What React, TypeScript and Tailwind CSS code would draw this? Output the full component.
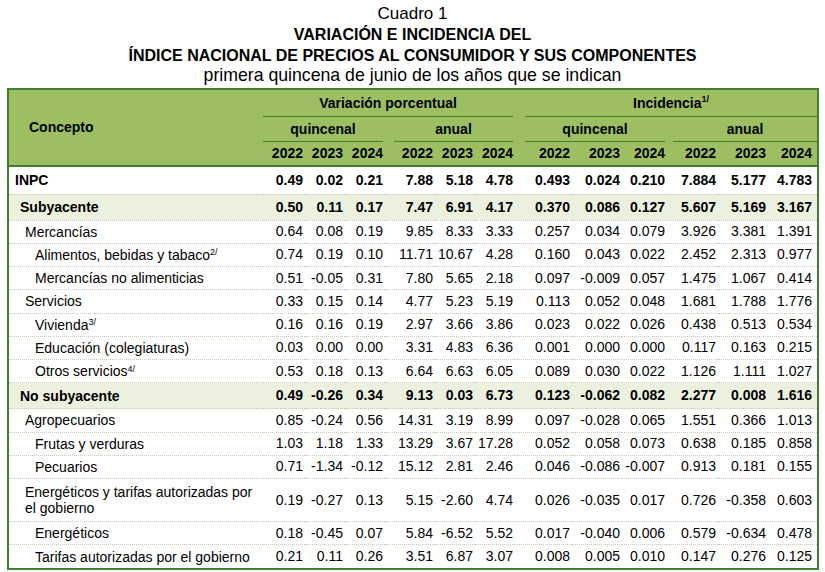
type Row = {
  label: string;
  sup?: string;
  level: 0 | 1 | 2 | 3;
  strong?: boolean;
  tall?: boolean;
  v: string[];
};

const ROWS: Row[] = [
  { label: "INPC", level: 0, strong: true, v: ["0.49", "0.02", "0.21", "7.88", "5.18", "4.78", "0.493", "0.024", "0.210", "7.884", "5.177", "4.783"] },
  { label: "Subyacente", level: 1, strong: true, v: ["0.50", "0.11", "0.17", "7.47", "6.91", "4.17", "0.370", "0.086", "0.127", "5.607", "5.169", "3.167"] },
  { label: "Mercancías", level: 2, v: ["0.64", "0.08", "0.19", "9.85", "8.33", "3.33", "0.257", "0.034", "0.079", "3.926", "3.381", "1.391"] },
  { label: "Alimentos, bebidas y tabaco", sup: "2/", level: 3, v: ["0.74", "0.19", "0.10", "11.71", "10.67", "4.28", "0.160", "0.043", "0.022", "2.452", "2.313", "0.977"] },
  { label: "Mercancías no alimenticias", level: 3, v: ["0.51", "-0.05", "0.31", "7.80", "5.65", "2.18", "0.097", "-0.009", "0.057", "1.475", "1.067", "0.414"] },
  { label: "Servicios", level: 2, v: ["0.33", "0.15", "0.14", "4.77", "5.23", "5.19", "0.113", "0.052", "0.048", "1.681", "1.788", "1.776"] },
  { label: "Vivienda", sup: "3/", level: 3, v: ["0.16", "0.16", "0.19", "2.97", "3.66", "3.86", "0.023", "0.022", "0.026", "0.438", "0.513", "0.534"] },
  { label: "Educación (colegiaturas)", level: 3, v: ["0.03", "0.00", "0.00", "3.31", "4.83", "6.36", "0.001", "0.000", "0.000", "0.117", "0.163", "0.215"] },
  { label: "Otros servicios", sup: "4/", level: 3, v: ["0.53", "0.18", "0.13", "6.64", "6.63", "6.05", "0.089", "0.030", "0.022", "1.126", "1.111", "1.027"] },
  { label: "No subyacente", level: 1, strong: true, v: ["0.49", "-0.26", "0.34", "9.13", "0.03", "6.73", "0.123", "-0.062", "0.082", "2.277", "0.008", "1.616"] },
  { label: "Agropecuarios", level: 2, v: ["0.85", "-0.24", "0.56", "14.31", "3.19", "8.99", "0.097", "-0.028", "0.065", "1.551", "0.366", "1.013"] },
  { label: "Frutas y verduras", level: 3, v: ["1.03", "1.18", "1.33", "13.29", "3.67", "17.28", "0.052", "0.058", "0.073", "0.638", "0.185", "0.858"] },
  { label: "Pecuarios", level: 3, v: ["0.71", "-1.34", "-0.12", "15.12", "2.81", "2.46", "0.046", "-0.086", "-0.007", "0.913", "0.181", "0.155"] },
  { label: "Energéticos y tarifas autorizadas por|el gobierno", level: 2, tall: true, v: ["0.19", "-0.27", "0.13", "5.15", "-2.60", "4.74", "0.026", "-0.035", "0.017", "0.726", "-0.358", "0.603"] },
  { label: "Energéticos", level: 3, v: ["0.18", "-0.45", "0.07", "5.84", "-6.52", "5.52", "0.017", "-0.040", "0.006", "0.579", "-0.634", "0.478"] },
  { label: "Tarifas autorizadas por el gobierno", level: 3, v: ["0.21", "0.11", "0.26", "3.51", "6.87", "3.07", "0.008", "0.005", "0.010", "0.147", "0.276", "0.125"] },
];

const COLS = ["w-[254px]", "w-[42px]", "w-[40px]", "w-[40px]", "w-[50px]", "w-[40px]", "w-[40px]", "w-[57px]", "w-[50px]", "w-[45px]", "w-[51px]", "w-[50px]", "w-[49px]"];
const YEARS = ["2022", "2023", "2024", "2022", "2023", "2024", "2022", "2023", "2024", "2022", "2023", "2024"];

const INDENT = ["pl-[6px]", "pl-[11px]", "pl-[16px]", "pl-[26px]"];

function rowHeight(r: Row) {
  if (r.tall) return "h-[43px]";
  if (r.level === 0) return "h-[28px]";
  if (r.level === 1) return "h-[26px]";
  return "h-[23.25px]";
}

function GroupHead({ children, line }: { children: React.ReactNode; line: string }) {
  return (
    <div className={`flex items-center justify-center border-b border-[#3f7f2f] ${line}`}>
      {children}
    </div>
  );
}

export default function App() {
  return (
    <div className="w-[825px] h-[572px] overflow-hidden bg-white text-black font-['Liberation_Sans',Arial,sans-serif]">
      {/* título */}
      <div className="pt-[3px] text-center">
        <div className="text-[17px] leading-[21px]">Cuadro 1</div>
        <div className="text-[16px] leading-[21px] font-bold">VARIACIÓN E INCIDENCIA DEL</div>
        <div className="text-[16px] leading-[21px] font-bold">
          ÍNDICE NACIONAL DE PRECIOS AL CONSUMIDOR Y SUS COMPONENTES
        </div>
        <div className="text-[17.7px] leading-[18px]">primera quincena de junio de los años que se indican</div>
      </div>

      <div className="mt-[4px] ml-[7px] w-[812px] border-2 border-[#3f7f2f]">
        <table className="w-[808px] table-fixed border-collapse text-[14px]">
          <colgroup>
            {COLS.map((c, i) => (
              <col key={i} className={c} />
            ))}
          </colgroup>
          <thead className="bg-[#9dbf62] font-bold">
            <tr>
              <th rowSpan={3} className="pl-[20px] text-left align-middle font-bold border-b-2 border-[#3f7f2f]">
                Concepto
              </th>
              <th colSpan={6} className="p-0 font-bold">
                <GroupHead line="h-[27px] mr-[2px]">Variación porcentual</GroupHead>
              </th>
              <th colSpan={6} className="p-0 font-bold">
                <GroupHead line="h-[27px] ml-[10px]">
                  Incidencia<sup className="text-[9px]">1/</sup>
                </GroupHead>
              </th>
            </tr>
            <tr>
              <th colSpan={3} className="p-0 font-bold">
                <GroupHead line="h-[25px] mr-[2px]">quincenal</GroupHead>
              </th>
              <th colSpan={3} className="p-0 font-bold">
                <GroupHead line="h-[25px] ml-[9px] mr-[2px]">anual</GroupHead>
              </th>
              <th colSpan={3} className="p-0 font-bold">
                <GroupHead line="h-[25px] ml-[10px] mr-[2px]">quincenal</GroupHead>
              </th>
              <th colSpan={3} className="p-0 font-bold">
                <GroupHead line="h-[25px] ml-[6px]">anual</GroupHead>
              </th>
            </tr>
            <tr className="h-[24px]">
              {YEARS.map((y, i) => (
                <th
                  key={i}
                  className={`text-right font-bold border-b-2 border-[#3f7f2f] ${i === 11 ? "pr-[5px]" : "pr-[2px]"}`}
                >
                  {y}
                </th>
              ))}
            </tr>
          </thead>
          <tbody>
            {ROWS.map((r, ri) => {
              const last = ri === ROWS.length - 1;
              const lines = r.label.split("|");
              return (
                <tr
                  key={ri}
                  className={`${rowHeight(r)} ${r.level === 1 ? "bg-[#ecf1df]" : "bg-white"} ${r.strong ? "font-bold" : ""}`}
                >
                  <td
                    className={`${INDENT[r.level]} leading-[16px] whitespace-nowrap ${last ? "" : "border-b border-dotted border-[#c5ceb0]"}`}
                  >
                    {lines.map((l, li) => (
                      <div key={li}>
                        {l}
                        {r.sup && <sup className="text-[9px]">{r.sup}</sup>}
                      </div>
                    ))}
                  </td>
                  {r.v.map((n, i) => (
                    <td
                      key={i}
                      className={`text-right whitespace-nowrap ${i === 11 ? "pr-[5px]" : "pr-[2px]"} ${last ? "" : "border-b border-dotted border-[#c5ceb0]"}`}
                    >
                      {n}
                    </td>
                  ))}
                </tr>
              );
            })}
          </tbody>
        </table>
      </div>
      <div className="pl-[11px] pt-[1px] text-[8px] leading-none text-[#333]">1/</div>
    </div>
  );
}
